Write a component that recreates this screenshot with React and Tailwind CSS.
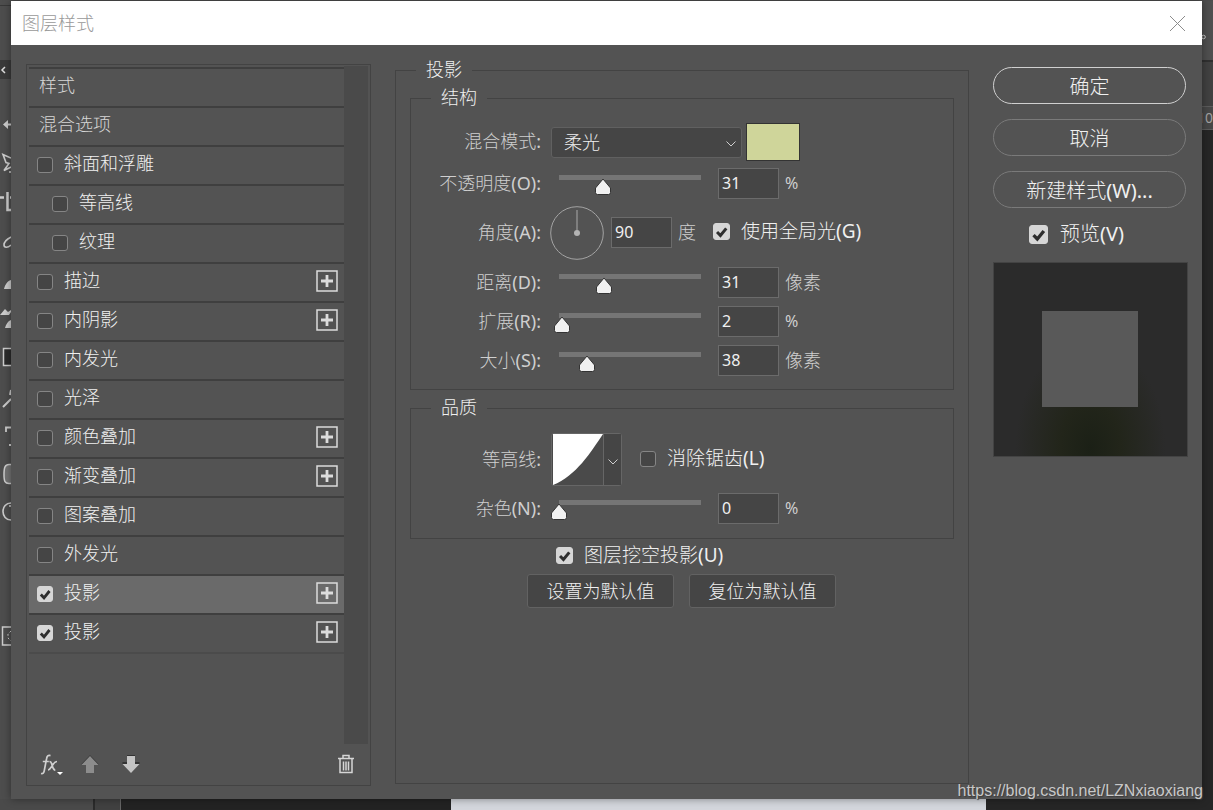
import React, { useState } from "react";

const EFFECTS = [
  { id: "bevel", name: "斜面和浮雕" },
  { id: "bevel-contour", name: "等高线", sub: true },
  { id: "bevel-texture", name: "纹理", sub: true },
  { id: "stroke", name: "描边", multi: true },
  { id: "inner-shadow", name: "内阴影", multi: true },
  { id: "inner-glow", name: "内发光" },
  { id: "satin", name: "光泽" },
  { id: "color-overlay", name: "颜色叠加", multi: true },
  { id: "gradient-overlay", name: "渐变叠加", multi: true },
  { id: "pattern-overlay", name: "图案叠加" },
  { id: "outer-glow", name: "外发光" },
  { id: "shadow-1", name: "投影", multi: true, on: true, selected: true },
  { id: "shadow-2", name: "投影", multi: true, on: true },
];

// visible halves of the toolbar icons, the dialog covers the rest
const TOOLS = [
  <path key="move" d="M3 19.5 8 15v3.500h3v2H8V24z" fill="#ccc" />,
  <path key="select" d="M11 14 3 10.500l3 8 3 1-5 7 7-3.500M9 28h2" fill="none" stroke="#ccc" strokeWidth="1.600" />,
  <path key="crop" d="M0 14.500h4M7.500 9v18H11M10 14.500h1" fill="none" stroke="#ccc" strokeWidth="2.500" />,
  <path key="brush" d="M11 15c-4 2-7 5-7 8 0 3 4 3 7 0" fill="none" stroke="#ccc" strokeWidth="1.600" />,
  <path key="paint" d="M4 28c1-4 3-8 7-9v9z" fill="#ccc" />,
  <path key="stamp" d="M0 15 5 9l3 3 3-2v2l-2 3zM5 28c1-4 3-7 6-8v8z" fill="#ccc" />,
  <path key="gradient" d="M11 9.500H3.500v17H11" fill="#2b2b2b" stroke="#ccc" strokeWidth="1.500" />,
  <path key="pen" d="M3 29l8-8M10 17l1-5" fill="none" stroke="#ccc" strokeWidth="2" />,
  <path key="type" d="M6 15V10.500h5M9 28h2" fill="none" stroke="#ccc" strokeWidth="1.800" />,
  <path key="shape" d="M11 8.500H9c-4 0-5 3-5 10s1 9 5 9h2" fill="#737373" stroke="#ccc" strokeWidth="1.500" />,
  <path key="zoom" d="M11 8C6 8 3 12 3 16.500S6 25 11 25M9 11h2" fill="none" stroke="#ccc" strokeWidth="1.600" />,
];

const Check = ({ id, defaultChecked, className = "size-4" }) => (
  <span className="grid shrink-0">
    <input
      id={id}
      type="checkbox"
      defaultChecked={defaultChecked}
      className={`peer col-start-1 row-start-1 appearance-none rounded-[3px] border border-[#858585] bg-[#454545] checked:border-[#d6d6d6] checked:bg-[#d6d6d6] ${className}`}
    />
    <svg
      viewBox="0 0 16 16"
      className={`pointer-events-none invisible col-start-1 row-start-1 peer-checked:visible ${className}`}
    >
      <path d="M3.800 8.500 7 11.800 12.500 5" fill="none" stroke="#2e2e2e" strokeWidth="2.800" />
    </svg>
  </span>
);

const Chevron = ({ className = "" }) => (
  <svg viewBox="0 0 10 6" className={`pointer-events-none h-1.5 w-2.5 ${className}`}>
    <path d="M.5.5 5 5 9.500.5" fill="none" stroke="#cfcfcf" />
  </svg>
);

const NumberBox = ({ id, label, value, onChange }) => (
  <input
    id={id}
    aria-label={label}
    value={value}
    onChange={onChange}
    className="h-[31px] w-[61px] border border-[#6b6b6b] bg-[#454545] pl-[3px] pb-0.5 text-base text-[#f0f0f0] outline-none"
  />
);

const SliderRow = ({ id, label, unit, initial, max = 100 }) => {
  const [value, setValue] = useState(initial);
  const onChange = (e) => setValue(Number(e.target.value) || 0);
  const percent = Math.min(100, (value / max) * 100);

  return (
    <div className="flex h-[31px]">
      <label htmlFor={id} className="w-[130px] self-center pb-0.5 text-right text-[#cfcfcf]">
        {label}
      </label>
      <div className="relative ml-[18px] w-[142px] pt-[7px]">
        <input
          type="range"
          aria-label={label}
          min="0"
          max={max}
          value={value}
          onChange={onChange}
          className="block h-[5px] w-full appearance-none bg-[#757575] [&::-webkit-slider-thumb]:size-4 [&::-webkit-slider-thumb]:appearance-none"
        />
        <svg
          viewBox="0 0 18 18"
          className="pointer-events-none absolute top-2.5 size-[18px] -translate-x-1/2"
          style={{ left: `${percent}%` }}
        >
          <path
            d="M9 1 16.500 10v4.500a2 2 0 0 1-2 2h-11a2 2 0 0 1-2-2V10z"
            fill="#f0f0f0"
            stroke="#333"
          />
        </svg>
      </div>
      <div className="ml-[17px] flex items-center gap-1.5 text-[#cfcfcf]">
        <NumberBox id={id} label={label} value={value} onChange={onChange} />
        <span className={unit === "%" ? "pb-0.5 text-base leading-6" : "pb-0.5"}>{unit}</span>
      </div>
    </div>
  );
};

const Group = ({ title, children, className = "" }) => (
  <fieldset className={`border border-[#434343] ${className}`}>
    <legend className="ml-5 h-6 px-2.5 leading-[22px]">{title}</legend>
    {children}
  </fieldset>
);

const EffectList = () => (
  <section className="mt-[19px] mb-[13px] flex w-[345px] shrink-0 flex-col border border-[#434343] pt-px pr-0.5 pl-0.5">
    <div className="flex flex-1">
      <ul className="flex-1 pt-px">
        <li className="flex h-[39px] items-center border-t-2 border-[#3f3f3f] pb-1.5 pl-2.5 text-[#d6d6d6]">样式</li>
        <li className="flex h-[39px] items-center border-t-2 border-[#3f3f3f] pb-1.5 pl-2.5 text-[#d6d6d6]">
          混合选项
        </li>
        {EFFECTS.map((effect) => (
          <li
            key={effect.id}
            className={`flex h-[39px] items-center border-t-2 border-[#3f3f3f] pr-1.5 pb-0.5 ${
              effect.sub ? "pl-[23px]" : "pl-2"
            } ${effect.selected ? "bg-[#6a6a6a]" : ""}`}
          >
            <Check id={effect.id} defaultChecked={effect.on} />
            <label htmlFor={effect.id} className="flex-1 pb-[3px] pl-[11px]">
              {effect.name}
            </label>
            {effect.multi && (
              <button type="button" aria-label={`添加${effect.name}`} className="pb-px">
                <svg viewBox="0 0 22 22" className="block size-[22px]">
                  <path d="M1 1h20v20H1z" fill="none" stroke="#dcdcdc" strokeWidth="1.500" />
                  <path d="M11 5v12M5 11h12" stroke="#dcdcdc" strokeWidth="2.800" />
                </svg>
              </button>
            )}
          </li>
        ))}
        <li aria-hidden="true" className="border-t-2 border-[#4b4b4b]" />
      </ul>
      <div className="w-6 bg-[#4a4a4a]" />
    </div>
    <div className="flex h-[41px] items-center pr-[13px] pb-0.5 pl-[11px]">
      <button type="button" aria-label="效果">
        <svg viewBox="0 0 24 22" className="h-[22px] w-6">
          <path
            d="M1 20.500c2 .5 2.800-.5 3.200-2.500L6.500 6C7 3 8 2 10.500 2.600M2.800 8.500h6M9.500 8.500c2 0 2 1.500 2.800 4.500s1.200 4.200 3 4.200M17 8.500c-2.500 0-4 3-5 4.500s-2.200 4-4 4"
            fill="none"
            stroke="#d0d0d0"
            strokeWidth="1.700"
          />
          <path d="M17 19h6l-3 3z" fill="#fff" />
        </svg>
      </button>
      <button type="button" aria-label="上移" className="ml-[17px]">
        <svg viewBox="0 0 18 18" className="size-[18px]">
          <path d="M0 9.500 9 0l9 9.500z" fill="#3b3b3b" />
          <path d="M.5 10 9 1l8.500 9H13v8H5v-8z" fill="#8c8c8c" />
        </svg>
      </button>
      <button type="button" aria-label="下移" className="ml-[23px]">
        <svg viewBox="0 0 18 18" className="size-[18px]">
          <path d="M5 0h8v7h4.500v2H.5V7H5z" fill="#333" />
          <path d="M5 1h8v8h4.500L9 18 .5 9H5z" fill="#c4c4c4" />
        </svg>
      </button>
      <button type="button" aria-label="删除" className="ml-auto">
        <svg viewBox="0 0 18 20" className="h-5 w-[18px]">
          <path
            d="M1 4.500h16M6 4V1.500h6V4M3 5v13.500h12V5M6.500 7.500v9M9 7.500v9M11.500 7.500v9"
            fill="none"
            stroke="#d6d6d6"
            strokeWidth="1.500"
          />
        </svg>
      </button>
    </div>
  </section>
);

const ShadowSettings = () => {
  const [angle, setAngle] = useState("90");

  return (
    <fieldset className="mt-[13px] mb-[15px] min-w-0 flex-1 border border-[#434343] px-3.5">
      <legend className="ml-1.5 h-6 px-2.5 leading-[22px]">投影</legend>

      <Group title="结构" className="mt-1 pb-[13px]">
        <div className="flex flex-col gap-[7px] pt-[13px]">
          <div className="flex h-[38px] items-center">
            <label htmlFor="blend" className="w-[130px] pb-0.5 text-right text-[#cfcfcf]">
              混合模式:
            </label>
            <div className="ml-2.5 grid w-[191px] items-center">
              <select
                id="blend"
                className="col-start-1 row-start-1 h-[31px] appearance-none rounded-[3px] border border-[#606060] bg-[#454545] pl-3"
              >
                <option>柔光</option>
              </select>
              <Chevron className="col-start-1 row-start-1 mt-1 mr-1.5 justify-self-end" />
            </div>
            <button
              type="button"
              aria-label="阴影颜色"
              className="ml-1 h-[38px] w-[54px] border border-[#333] bg-[#cfd59a]"
            />
          </div>

          <SliderRow id="opacity" label="不透明度(O):" unit="%" initial={31} />

          <div className="flex h-[54px] items-center">
            <label htmlFor="angle" className="w-[130px] pb-0.5 text-right text-[#cfcfcf]">
              角度(A):
            </label>
            <svg viewBox="0 0 54 54" className="ml-[9px] size-[54px]">
              <circle cx="27" cy="27" r="26.300" fill="none" stroke="#a3a3a3" />
              <path d="M27 27V4" stroke="#8c8c8c" strokeWidth="1.500" />
              <circle cx="27" cy="27" r="3" fill="#b3b3b3" />
            </svg>
            <div className="ml-[7px] flex items-center gap-1.5 pb-px text-[#cfcfcf]">
              <NumberBox id="angle" label="角度" value={angle} onChange={(e) => setAngle(e.target.value)} />
              <span className="pb-0.5">度</span>
            </div>
            <div className="ml-[17px] flex items-center gap-[11px] pb-1">
              <Check id="global-light" defaultChecked className="size-[17px]" />
              <label htmlFor="global-light" className="text-[19px] leading-6">
                使用全局光(G)
              </label>
            </div>
          </div>

          <div className="flex flex-col gap-2">
            <SliderRow id="distance" label="距离(D):" unit="像素" initial={31} max={97} />
            <SliderRow id="spread" label="扩展(R):" unit="%" initial={2} />
            <SliderRow id="size" label="大小(S):" unit="像素" initial={38} max={190} />
          </div>
        </div>
      </Group>

      <Group title="品质" className="mt-1.5 pb-3.5">
        <div className="flex flex-col gap-[7px] pt-[13px]">
          <div className="flex h-[53px] items-center">
            <span className="w-[130px] pb-0.5 text-right text-[#cfcfcf]">等高线:</span>
            <button
              type="button"
              aria-label="等高线"
              className="ml-2.5 flex h-[53px] w-[71px] items-center rounded-[3px] border border-[#666] bg-[#4a4a4a]"
            >
              <svg viewBox="0 0 51 51" className="size-[51px]">
                <path d="M1 0h50C39 18 24 42 1 51z" fill="#fff" />
              </svg>
              <span className="flex h-full flex-1 items-center justify-center border-l border-[#666] bg-[#454545] pt-1">
                <Chevron />
              </span>
            </button>
            <div className="ml-[18px] flex items-center gap-[11px] pb-0.5">
              <Check id="anti-alias" />
              <label htmlFor="anti-alias" className="pb-0.5 text-[19px] leading-6">
                消除锯齿(L)
              </label>
            </div>
          </div>
          <SliderRow id="noise" label="杂色(N):" unit="%" initial={0} />
        </div>
      </Group>

      <div className="mt-1 ml-[146px] flex h-6 items-center gap-[11px]">
        <Check id="knockout" defaultChecked className="size-[17px]" />
        <label htmlFor="knockout" className="text-[19px] leading-6">
          图层挖空投影(U)
        </label>
      </div>
      <div className="mt-[7px] ml-[117px] flex gap-[15px]">
        <button type="button" className="h-[34px] w-[147px] rounded-[3px] border border-[#626262] bg-[#454545]">
          设置为默认值
        </button>
        <button type="button" className="h-[34px] w-[147px] rounded-[3px] border border-[#626262] bg-[#454545]">
          复位为默认值
        </button>
      </div>
    </fieldset>
  );
};

const Actions = () => (
  <aside className="w-[195px] shrink-0 pt-[22px] text-xl">
    <div className="flex flex-col gap-[15px] pr-0.5">
      <button type="button" className="h-[37px] rounded-full border border-[#d0d0d0] pt-0.5">
        确定
      </button>
      <button type="button" className="h-[37px] rounded-full border border-[#7a7a7a] pt-0.5">
        取消
      </button>
      <button type="button" className="h-[37px] rounded-full border border-[#7a7a7a] pt-0.5">
        新建样式(W)...
      </button>
    </div>
    <div className="mt-3 ml-9 flex items-center gap-3">
      <Check id="preview" defaultChecked className="size-[19px]" />
      <label htmlFor="preview">预览(V)</label>
    </div>
    <div className="mt-3.5 flex h-[195px] items-center justify-center border border-[#434343] bg-[#2b2b2b] bg-[radial-gradient(ellipse_75px_110px_at_50%_96%,#1b2016_0%,#22251a_40%,#2b2b2b_100%)] pr-0.5 pb-0.5">
      <div className="size-24 bg-[#595959]" />
    </div>
  </aside>
);

export default function App() {
  return (
    <div className="relative flex min-h-screen flex-col overflow-hidden bg-[#4d4d4d] pt-px font-['Noto_Sans','Noto_Sans_CJK_SC_Light','Noto_Sans_CJK_SC_DemiLight','Noto_Sans_CJK_SC',sans-serif] text-lg leading-6 text-[#f0f0f0]">
      <div className="flex flex-1">
        <div className="w-[11px] shrink-0">
          <div className="h-[5px] border-b border-[#383838]" />
          <div className="mt-[54px] flex h-[19px] items-center bg-[#3a3a3a]">
            <svg viewBox="0 0 11 10" className="h-2.5 w-[11px]">
              <path d="M5 2 2 5l3 3" fill="none" stroke="#ddd" strokeWidth="1.500" />
            </svg>
          </div>
          <div className="mt-[26px] flex flex-col gap-px">
            {TOOLS.map((tool) => (
              <svg key={tool.key} viewBox="0 0 11 38" className="h-[38px] w-[11px]">
                {tool}
              </svg>
            ))}
          </div>
          <svg viewBox="0 0 11 20" className="mt-[93px] h-5 w-[11px]">
            <path d="M11 1H2.500v18H11" fill="none" stroke="#ccc" strokeWidth="1.500" />
            <path d="M11 5 8 8v4l3 3" fill="none" stroke="#ccc" strokeDasharray="2 2" />
          </svg>
        </div>

        <main className="z-10 flex min-w-0 flex-1 flex-col bg-[#535353] shadow-[0_0_8px_rgba(0,0,0,0.4)]">
          <header className="flex h-11 items-center justify-between bg-white pr-4 pl-[11px]">
            <h1 className="text-[#999]">图层样式</h1>
            <button type="button" aria-label="关闭">
              <svg viewBox="0 0 17 17" className="size-[17px]">
                <path d="m1 1 15 15M16 1 1 16" stroke="#8c8c8c" />
              </svg>
            </button>
          </header>
          <div className="flex flex-1 gap-6 pr-3.5 pl-[15px]">
            <EffectList />
            <ShadowSettings />
            <Actions />
          </div>
        </main>

        <div className="flex w-[11px] shrink-0 flex-col bg-[#262626]">
          <div className="flex h-[61px] items-center border-b-2 border-[#303030] bg-[#4f4f4f] pt-3">
            <svg viewBox="0 0 11 6" className="h-1.5 w-[11px]">
              <circle cx="1.500" cy="3" r="1.800" fill="none" stroke="#ccc" />
            </svg>
          </div>
          <div className="h-11 bg-[#414141]" />
          <div className="flex h-6 items-center justify-end border-t border-b border-[#5c5c5c] bg-[#474747] text-sm text-[#a3a3a3]">
            10
          </div>
        </div>
      </div>

      <div className="flex h-[11px]">
        <div className="w-[95px] border-r-2 border-[#2b2b2b] bg-[#4a4a4a]" />
        <div className="w-[26px] border-r border-[#666] bg-[#414141]" />
        <div className="w-[330px] bg-[#232323]" />
        <div className="flex-1 bg-[#d3d6dc]" />
        <div className="w-[227px] bg-[#262626]" />
      </div>

      <a
        href="https://blog.csdn.net/LZNxiaoxiang"
        className="absolute right-2.5 bottom-[7px] z-20 font-['Liberation_Sans',sans-serif] text-base leading-6 text-[#c8c8c8] [text-shadow:1px_1px_1px_#3b3b3b]"
      >
        https://blog.csdn.net/LZNxiaoxiang
      </a>
    </div>
  );
}
